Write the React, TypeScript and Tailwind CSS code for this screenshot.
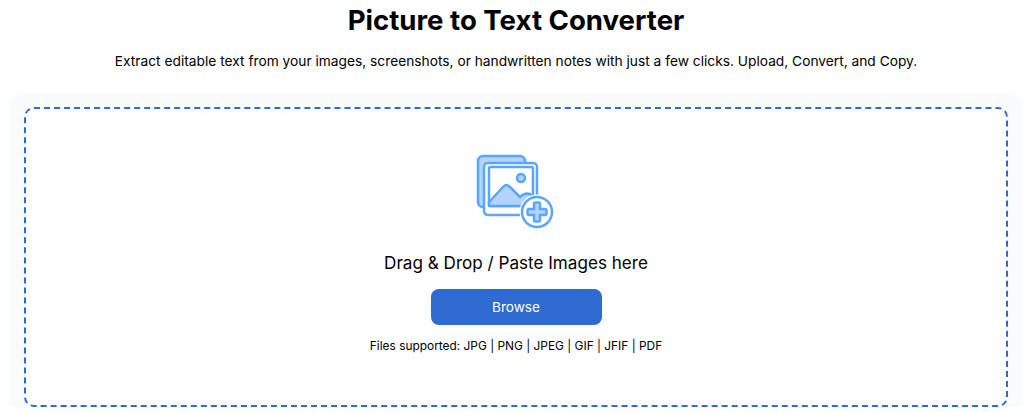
export default function App() {
  return (
    <div className="h-[412px] overflow-hidden bg-white pl-[9px] pr-[1px] font-['Inter',sans-serif] text-black">
      <h1 className="pt-[4px] text-center text-[27.6px] font-bold leading-[33px]">Picture to Text Converter</h1>
      <p className="mt-[14px] text-center text-[13.76px] leading-[20px]">
        Extract editable text from your images, screenshots, or handwritten notes with just a few clicks. Upload, Convert, and Copy.
      </p>
      <div className="mt-[22px] rounded-t-[12px] bg-[#fafbfd] px-[15px] pt-[14px]">
        <div className="flex h-[300px] flex-col items-center rounded-[10px] border-2 border-dashed border-[#2f6ad0] bg-white">
          <svg className="mt-[45px]" width="80" height="76" viewBox="0 0 80 76" fill="none">
            <rect x="2" y="2" width="47" height="51" rx="5" fill="#b3d4ff" stroke="#5aa5ff" strokeWidth="2.5" />
            <rect x="8" y="9" width="53" height="52" rx="4" fill="#fff" stroke="#5aa5ff" strokeWidth="2.5" />
            <rect x="13" y="13" width="44" height="39" rx="2" fill="#fff" stroke="#5aa5ff" strokeWidth="2.5" />
            <path d="M13 48 L27 33 Q30 29 34 33 L44 43 Q49 38 54 40 L57 43 V52 H13 Z" fill="#b3d4ff" stroke="#5aa5ff" strokeWidth="2.5" strokeLinejoin="round" />
            <circle cx="45" cy="24" r="4" fill="#b3d4ff" stroke="#5aa5ff" strokeWidth="2.5" />
            <circle cx="61" cy="58" r="17.5" fill="#fff" />
            <circle cx="61" cy="58" r="15" fill="#fff" stroke="#5aa5ff" strokeWidth="2.5" />
            <path d="M58 50 a1.5 1.5 0 0 1 1.5 -1.5 h3 a1.5 1.5 0 0 1 1.5 1.5 V55 h5 a1.5 1.5 0 0 1 1.5 1.5 v3 a1.5 1.5 0 0 1 -1.5 1.5 H64 v5 a1.5 1.5 0 0 1 -1.5 1.5 h-3 a1.5 1.5 0 0 1 -1.5 -1.5 V61 h-5 a1.5 1.5 0 0 1 -1.5 -1.5 v-3 a1.5 1.5 0 0 1 1.5 -1.5 H58 Z" fill="#b3d4ff" stroke="#5aa5ff" strokeWidth="2.5" />
          </svg>
          <p className="mt-[21px] text-[17.1px] leading-[24px]">Drag &amp; Drop / Paste Images here</p>
          <button className="mt-[14px] h-[36px] w-[171px] rounded-[8px] bg-[#2f6ad0] text-[13.6px] font-normal text-white">Browse</button>
          <p className="mt-[13px] text-[11.9px] leading-[16px]">Files supported: JPG | PNG | JPEG | GIF | JFIF | PDF</p>
        </div>
      </div>
    </div>
  );
}
